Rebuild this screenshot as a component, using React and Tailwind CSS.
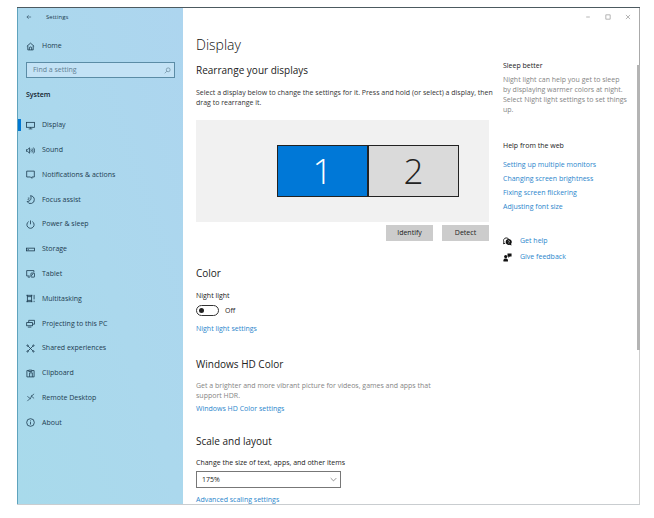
import { useState } from "react";

const ICONS = {
  back: <path d="M17 10H3M9 4l-6 6 6 6" />,
  home: (
    <>
      <path d="M2 9.5 10 2.5l8 7" />
      <path d="M4 8.5V17.5h12V8.5" />
      <path d="M7.5 17.5v-4a2.5 2.5 0 0 1 5 0v4" />
    </>
  ),
  search: (
    <>
      <circle cx="12" cy="8" r="5.5" />
      <path d="M8 12l-6 6" />
    </>
  ),
  display: (
    <>
      <rect x="1" y="3" width="18" height="11" />
      <path d="M10 14v3M6 17.5h8" />
    </>
  ),
  sound: (
    <>
      <path d="M1 8v4h2.5L8 16V4L3.5 8z" />
      <path d="M11 7.5c1.2 1.5 1.2 3.5 0 5M13.5 5.5c2.4 2.6 2.4 6.4 0 9M16.5 3.5c3.2 3.6 3.2 9.4 0 13" />
    </>
  ),
  notifications: <path d="M1.5 2.5h17v13H13v3l-3-3H1.5z" />,
  focus: (
    <>
      <path d="M10 1.5c5 .5 8.500 4 8.500 8.500a8.5 8.5 0 0 1-16 4.500C9 15 13.500 8 10 1.5z" />
      <path d="M4 6.500h3.500L4 10.500h3.500" strokeWidth="1.2" />
    </>
  ),
  power: (
    <>
      <path d="M6 3.5a8 8 0 1 0 8 0" />
      <path d="M10 1v8.5" />
    </>
  ),
  storage: (
    <>
      <rect x="1" y="7" width="18" height="6" />
      <path d="M3.5 10.5h3" />
    </>
  ),
  tablet: (
    <>
      <path d="M8 15.5H1.5v-12h16V7" />
      <rect x="11" y="9" width="8" height="9" rx="1" />
      <path d="M4 18h5M12 15l4-5" />
    </>
  ),
  multitasking: (
    <>
      <rect x="3" y="6" width="9.5" height="8" />
      <path d="M1 3h13M1 17h13M3 2v4M12.5 2v4M3 14v4M12.5 14v4M18 2v10M18 15v3" />
    </>
  ),
  projecting: (
    <>
      <path d="M6 8V3h13v8.5h-4" />
      <rect x="1.5" y="8" width="13" height="7" />
      <path d="M4 18h8" />
    </>
  ),
  shared: (
    <>
      <path d="M4.5 4.5l11 11M15.5 4.5l-11 11" />
      <circle cx="3.5" cy="3.5" r="1.5" />
      <circle cx="16.5" cy="3.5" r="1.5" />
      <circle cx="3.5" cy="16.5" r="1.5" />
      <circle cx="16.5" cy="16.5" r="1.5" />
    </>
  ),
  clipboard: (
    <>
      <path d="M8 17.5H2v-14h4M13 3.5h5v14H8" />
      <path d="M6 5.5v-3h7v3z" />
      <path d="M8 17.5V8.5h6v9" />
    </>
  ),
  remote: <path d="M3 7.5l6 4.5-6 6M18 2l-6 5 6 5M9 14l4-9" strokeWidth="1.5" />,
  about: (
    <>
      <circle cx="10" cy="10" r="8.5" />
      <path d="M10 9v5.5M10 5.5v2" />
    </>
  ),
  minimize: <path d="M4 10h12" />,
  maximize: <rect x="3" y="3" width="14" height="14" />,
  close: <path d="M3 3l14 14M17 3L3 17" />,
  chevron: <path d="M2 6l8 8 8-8" />,
};

const NAV_ITEMS = [
  { key: "display", label: "Display" },
  { key: "sound", label: "Sound" },
  { key: "notifications", label: "Notifications & actions" },
  { key: "focus", label: "Focus assist" },
  { key: "power", label: "Power & sleep" },
  { key: "storage", label: "Storage" },
  { key: "tablet", label: "Tablet" },
  { key: "multitasking", label: "Multitasking" },
  { key: "projecting", label: "Projecting to this PC" },
  { key: "shared", label: "Shared experiences" },
  { key: "clipboard", label: "Clipboard" },
  { key: "remote", label: "Remote Desktop" },
  { key: "about", label: "About" },
];

const HELP_LINKS = [
  "Setting up multiple monitors",
  "Changing screen brightness",
  "Fixing screen flickering",
  "Adjusting font size",
];

function Icon({ name, className = "size-[9px]" }) {
  return (
    <svg
      viewBox="0 0 20 20"
      className={`shrink-0 ${className}`}
      fill="none"
      stroke="currentColor"
      strokeWidth="1.8"
      aria-hidden="true"
    >
      {ICONS[name]}
    </svg>
  );
}

function TextLink({ children }) {
  return (
    <a href="#" className="text-[#2b86cc] hover:text-gray-500">
      {children}
    </a>
  );
}

function Sidebar({ selected, onSelect }) {
  return (
    <aside className="flex w-[166px] shrink-0 flex-col border-l border-[#5fa3bd] bg-linear-to-bl from-[#add5ef] via-[#abd8ed] to-[#a8daeb] text-[#1d3c50]">
      <div className="flex h-[18px] items-center gap-[14px] pl-2">
        <button aria-label="Back">
          <Icon name="back" className="size-[6px]" />
        </button>
        <span className="text-[6px]">Settings</span>
      </div>
      <a href="#" className="mt-3 flex h-4 items-center gap-[7px] pl-2">
        <Icon name="home" />
        Home
      </a>
      <div className="mt-2 mr-2 ml-2 flex h-4 items-center border border-[#5b8ca6] bg-[#c3e2f5] pr-[3px] pl-[6px]">
        <input
          type="text"
          aria-label="Find a setting"
          placeholder="Find a setting"
          className="min-w-0 flex-1 outline-none placeholder:text-[#5f7f93]"
        />
        <Icon name="search" className="size-[7px] text-[#5f7f93]" />
      </div>
      <h2 className="mt-3 pl-2 font-semibold text-[#10202c]">System</h2>
      <nav className="mt-[13px] mb-[69px] grid flex-1 auto-rows-fr">
        {NAV_ITEMS.map((item) => (
          <button
            key={item.key}
            onClick={() => onSelect(item.key)}
            className="flex items-center text-left"
          >
            <span className={`h-3 w-[3px] ${selected === item.key ? "bg-[#0078d4]" : ""}`} />
            <span className="flex items-center gap-[7px] pl-[5px]">
              <Icon name={item.key} />
              {item.label}
            </span>
          </button>
        ))}
      </nav>
    </aside>
  );
}

function Rearrange() {
  const [active, setActive] = useState(1);

  return (
    <section>
      <h2 className="mt-[9px] text-[10px] leading-3">Rearrange your displays</h2>
      <p className="mt-3 -mr-3 text-[#333]">
        Select a display below to change the settings for it. Press and hold (or select) a display, then drag to rearrange it.
      </p>
      <div className="mt-3 flex h-[102px] items-center justify-end bg-[#f1f1f1] pr-[30px]">
        {[1, 2].map((n) => (
          <button
            key={n}
            onClick={() => setActive(n)}
            className={`h-[52px] w-[91px] border border-[#222] text-[35px] leading-[50px] font-light ${
              active === n ? "bg-[#0078d7] text-white" : "bg-[#dadada] text-[#222]"
            }`}
          >
            {n}
          </button>
        ))}
      </div>
      <div className="mt-[3px] flex justify-end gap-[9px]">
        <button className="h-4 w-[47px] bg-[#cccccc]">Identify</button>
        <button className="h-4 w-[47px] bg-[#cccccc]">Detect</button>
      </div>
    </section>
  );
}

function Aside() {
  return (
    <aside className="mt-[35px] w-[126px] shrink-0">
      <h3 className="text-[#222]">Sleep better</h3>
      <p className="mt-1 text-[#858585]">
        Night light can help you get to sleep by displaying warmer colors at night. Select Night light settings to set things up.
      </p>
      <h3 className="mt-[26px] text-[#222]">Help from the web</h3>
      <ul className="mt-[7px]">
        {HELP_LINKS.map((text) => (
          <li key={text} className="leading-[14px]">
            <TextLink>{text}</TextLink>
          </li>
        ))}
      </ul>
      <ul className="mt-[19px]">
        <li className="flex h-4 items-center gap-2">
          <svg viewBox="0 0 20 20" className="size-[9px] shrink-0" aria-hidden="true">
            <path d="M7 2a6 6 0 0 0-5 9l-1 4 4-1" fill="none" stroke="#111" strokeWidth="2" />
            <path d="M7 2c3 0 5 1 6 3" fill="none" stroke="#111" strokeWidth="2" />
            <path d="M12.5 4.5a6.5 6.5 0 1 0 2.5 12.5l4 2-1-4a6.5 6.5 0 0 0-5.5-10.5z" fill="#111" />
            <path d="M11 9.5a1.7 1.7 0 1 1 2 2v1.5M13 14v1.5" fill="none" stroke="#fff" strokeWidth="1.2" />
          </svg>
          <TextLink>Get help</TextLink>
        </li>
        <li className="flex h-4 items-center gap-2">
          <svg viewBox="0 0 20 20" className="size-[9px] shrink-0" fill="#111" aria-hidden="true">
            <path d="M10 1h9v7h-4l-3 3V8h-2z" />
            <circle cx="6" cy="8" r="3.5" />
            <path d="M1 19v-3c0-2.5 2-4 5-4s5 1.5 5 4v3z" />
          </svg>
          <TextLink>Give feedback</TextLink>
        </li>
      </ul>
    </aside>
  );
}

function DisplaySettings() {
  const [nightLight, setNightLight] = useState(false);

  return (
    <main className="max-w-[293px] min-w-0 flex-1">
      <h1 className="mt-[9px] text-[14px] leading-5 font-light text-[#111]">Display</h1>
      <Rearrange />

      <section>
        <h2 className="mt-[26px] text-[10px] leading-3">Color</h2>
        <label htmlFor="night-light" className="mt-3 block">
          Night light
        </label>
        <div className="mt-1 flex items-center gap-[6px]">
          <input
            id="night-light"
            type="checkbox"
            role="switch"
            checked={nightLight}
            onChange={(e) => setNightLight(e.target.checked)}
            className="flex h-[11px] w-[23px] appearance-none items-center rounded-full border border-[#333] px-[2px] before:size-[5px] before:rounded-full before:bg-[#222] checked:justify-end checked:bg-[#0078d7] checked:before:bg-white"
          />
          <span>{nightLight ? "On" : "Off"}</span>
        </div>
        <p className="mt-2">
          <TextLink>Night light settings</TextLink>
        </p>
      </section>

      <section>
        <h2 className="mt-6 text-[10px] leading-3">Windows HD Color</h2>
        <p className="mt-[11px] mr-12 text-[#858585]">
          Get a brighter and more vibrant picture for videos, games and apps that support HDR.
        </p>
        <p className="mt-[3px]">
          <TextLink>Windows HD Color settings</TextLink>
        </p>
      </section>

      <section>
        <h2 className="mt-[21px] text-[10px] leading-3">Scale and layout</h2>
        <label htmlFor="scale" className="mt-[11px] block">
          Change the size of text, apps, and other items
        </label>
        <div className="relative mt-[3px] w-[145px]">
          <select
            id="scale"
            defaultValue="175%"
            className="block h-[17px] w-full appearance-none border border-[#777] bg-white px-[5px] outline-none"
          >
            <option>100%</option>
            <option>125%</option>
            <option>150%</option>
            <option>175%</option>
          </select>
          <Icon name="chevron" className="pointer-events-none absolute top-[5px] right-1 size-[7px] text-[#555]" />
        </div>
        <p className="mt-[7px]">
          <TextLink>Advanced scaling settings</TextLink>
        </p>
      </section>
    </main>
  );
}

export default function App() {
  const [page, setPage] = useState("display");

  return (
    <div className="h-screen bg-white pt-[7px] pr-[14px] pb-[13px] pl-[17px] font-['Open_Sans','Noto_Sans',sans-serif] text-[7px] leading-[10px] text-[#222]">
      <div className="flex h-full overflow-hidden border-t border-b border-t-[#4c5a60] border-b-[#c9cdd0]">
        <Sidebar selected={page} onSelect={setPage} />
        <div className="flex min-w-0 flex-1 flex-col">
          <div className="flex h-[18px] shrink-0 items-center justify-end gap-[14px] border-r border-[#aaa] pr-2 text-[#777]">
            <button aria-label="Minimize">
              <Icon name="minimize" className="size-[6px]" />
            </button>
            <button aria-label="Maximize">
              <Icon name="maximize" className="size-[6px]" />
            </button>
            <button aria-label="Close">
              <Icon name="close" className="size-[6px]" />
            </button>
          </div>
          <div className="flex min-h-0 flex-1">
            <div className="flex min-w-0 flex-1 gap-[14px] pl-[13px]">
              <DisplaySettings />
              <Aside />
            </div>
            {/* scroll bar */}
            <div className="flex w-[3px] flex-col items-end">
              <div className="h-[39px] w-px bg-[#aaa]" />
              <div className="h-[285px] w-[3px] bg-[#b4b4b4]" />
              <div className="w-px flex-1 bg-[#cfcfcf]" />
            </div>
          </div>
        </div>
      </div>
    </div>
  );
}
